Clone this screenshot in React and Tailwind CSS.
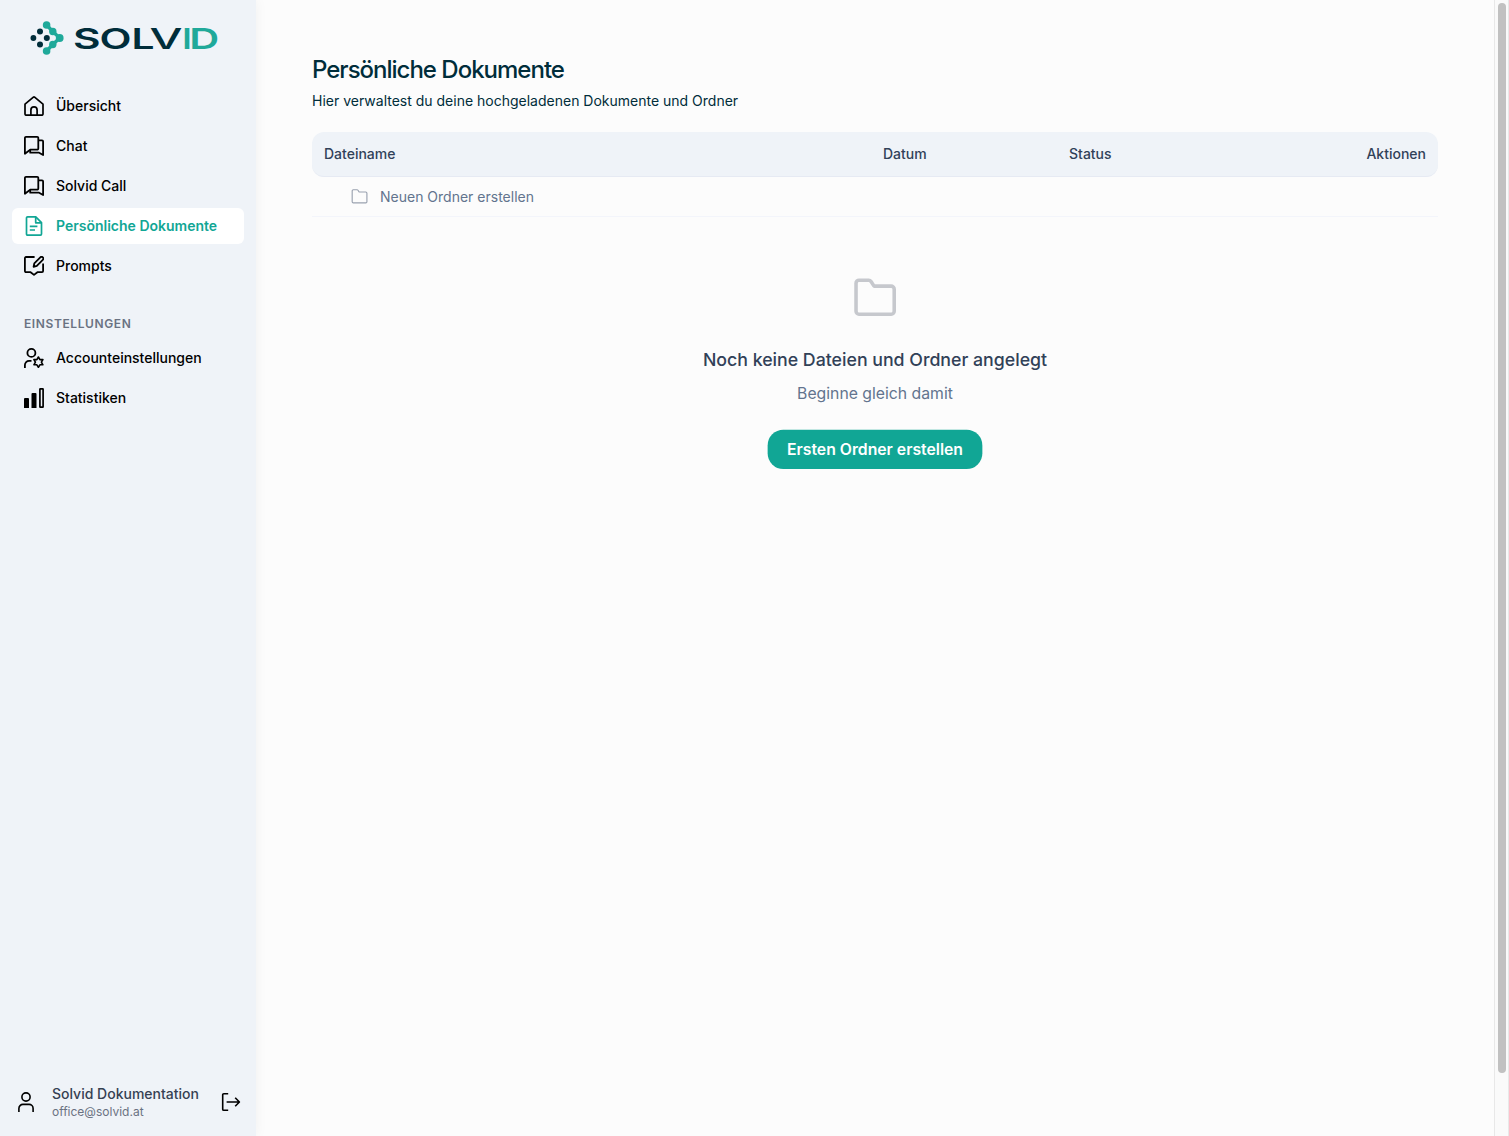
import React from 'react';

function Icon({ size = 20, width = 2, className = '', children }) {
  return (
    <svg
      width={size}
      height={size}
      viewBox="0 0 20 20"
      fill="none"
      stroke="currentColor"
      strokeWidth={width}
      strokeLinejoin="round"
      className={`shrink-0 ${className}`}
    >
      {children}
    </svg>
  );
}

function HomeIcon() {
  return (
    <Icon width={1.7}>
      <path d="M1 8.2 9.4 1.2a1 1 0 0 1 1.2 0L19 8.2V18a1.2 1.2 0 0 1-1.2 1.2H2.2A1.2 1.2 0 0 1 1 18z" />
      <path d="M6.9 19v-5a3.1 3.1 0 0 1 6.2 0v5" />
    </Icon>
  );
}

function ChatIcon() {
  return (
    <Icon width={1.8}>
      <path d="M.9 2A1.1 1.1 0 0 1 2 .9h11.2A1.1 1.1 0 0 1 14.3 2v10.6a1.1 1.1 0 0 1-1.1 1.1H6.2L.9 17.8z" />
      <path d="M14.3 4.4H18a1.1 1.1 0 0 1 1.1 1.1V19l-4-2.3H6.2v-3" />
    </Icon>
  );
}

function DocumentIcon() {
  return (
    <Icon width={1.7}>
      <path d="M2.5 2A1.1 1.1 0 0 1 3.6.9h8.2l5.7 5.7v11.4a1.1 1.1 0 0 1-1.1 1.1H3.6A1.1 1.1 0 0 1 2.5 18z" />
      <path d="M11.7 1v5.8h5.8M5.8 10.4h7.6M5.8 14h5.2" />
    </Icon>
  );
}

function PromptIcon() {
  return (
    <Icon width={1.8}>
      <path d="M10.6 1H2A1.1 1.1 0 0 0 .9 2.1v13a1.1 1.1 0 0 0 1.1 1.1h4.6l3.4 2.7 3.4-2.7H18a1.1 1.1 0 0 0 1.1-1.1V7.4" />
      <path d="m9.6 10.8.7-3.4 6-6a1.7 1.7 0 0 1 2.5 2.5l-6 6z" />
    </Icon>
  );
}

function AccountIcon() {
  return (
    <Icon width={1.8}>
      <circle cx="7.4" cy="4.9" r="4" />
      <path d="M.9 20v-3a4.2 4.2 0 0 1 4.2-4.2h2.4" />
      <path
        strokeWidth="1.6"
        d="m14.4 9 1.5 2.6h3l-1.5 2.6 1.5 2.6h-3l-1.5 2.6-1.5-2.6h-3l1.5-2.6-1.5-2.6h3z"
      />
    </Icon>
  );
}

function StatsIcon() {
  return (
    <Icon width={1.7}>
      <path fill="currentColor" stroke="none" d="M0 11a1 1 0 0 1 1-1h3a1 1 0 0 1 1 1v9H0zM7.5 6a1 1 0 0 1 1-1h3a1 1 0 0 1 1 1v14h-5z" />
      <rect x="15.9" y=".9" width="3.2" height="18.2" rx=".4" />
    </Icon>
  );
}

function FolderIcon({ size, width, className }) {
  return (
    <Icon size={size} width={width} className={className}>
      <path d="M2.3 4.1a1.2 1.2 0 0 1 1.2-1.2h3.9a1.2 1.2 0 0 1 1 .5l1.2 1.9h6.9a1.3 1.3 0 0 1 1.3 1.3v8.9a1.2 1.2 0 0 1-1.2 1.2H3.5a1.2 1.2 0 0 1-1.2-1.2z" />
    </Icon>
  );
}

function Logo() {
  return (
    <svg width="190" height="36" viewBox="0 0 190 36" className="block">
      <g fill="#002d3a">
        <circle cx="3.4" cy="18" r="2.9" />
        <circle cx="10" cy="11.5" r="3" />
        <circle cx="10" cy="24.5" r="3" />
        <circle cx="16.8" cy="18" r="3" />
      </g>
      <path d="M16.6 5 22.8 11.5 29.7 18 22.8 24.5 16.6 31" fill="none" stroke="#1fa99a" strokeWidth="3.4" />
      <g fill="#1fa99a">
        <circle cx="16.6" cy="5" r="3.8" />
        <circle cx="22.8" cy="11.5" r="3.7" />
        <circle cx="29.7" cy="18" r="3.9" />
        <circle cx="22.8" cy="24.5" r="3.7" />
        <circle cx="16.6" cy="31" r="3.8" />
      </g>
      <g fontFamily="Inter, sans-serif" fontWeight="600" fontSize="28.4" fill="#002d3a">
        <text x="43" y="28.6" textLength="27.5" lengthAdjust="spacingAndGlyphs">S</text>
        <text x="69.6" y="28.6" textLength="32" lengthAdjust="spacingAndGlyphs">O</text>
        <text x="101.5" y="28.6" textLength="23" lengthAdjust="spacingAndGlyphs">L</text>
        <text x="119.5" y="28.6" textLength="33" lengthAdjust="spacingAndGlyphs" fontWeight="500">V</text>
        <g fill="#1fa99a">
          <text x="152.3" y="28.6" textLength="9.5" lengthAdjust="spacingAndGlyphs">I</text>
          <text x="159.2" y="28.6" textLength="30" lengthAdjust="spacingAndGlyphs">D</text>
        </g>
      </g>
    </svg>
  );
}

function NavItem({ icon, label, active }) {
  return (
    <a
      className={`flex h-9 items-center gap-3 rounded-md px-3 text-sm ${
        active ? 'bg-white font-semibold text-[#11a695]' : 'font-medium text-black'
      }`}
    >
      {icon}
      {label}
    </a>
  );
}

function Sidebar() {
  return (
    <aside className="flex w-64 shrink-0 flex-col bg-[#eff3f8] shadow-[0_0_12px_rgba(0,0,0,0.05)]">
      <div className="pt-5 pl-[30px]">
        <Logo />
      </div>
      <nav className="mt-8 flex flex-col gap-1 px-3">
        <NavItem icon={<HomeIcon />} label="Übersicht" />
        <NavItem icon={<ChatIcon />} label="Chat" />
        <NavItem icon={<ChatIcon />} label="Solvid Call" />
        <NavItem icon={<DocumentIcon />} label="Persönliche Dokumente" active />
        <NavItem icon={<PromptIcon />} label="Prompts" />
      </nav>
      <h2 className="mt-8 px-6 text-xs font-semibold tracking-wider text-gray-500 uppercase">Einstellungen</h2>
      <nav className="mt-2 flex flex-col gap-1 px-3">
        <NavItem icon={<AccountIcon />} label="Accounteinstellungen" />
        <NavItem icon={<StatsIcon />} label="Statistiken" />
      </nav>

      <div className="mt-auto flex items-center pr-[15px] pb-4 pl-4">
        <Icon width={1.6}>
          <circle cx="10" cy="5" r="4.1" />
          <path d="M2.9 20v-3.6a4 4 0 0 1 4-4h6.2a4 4 0 0 1 4 4V20" />
        </Icon>
        <div className="ml-4 flex-1">
          <p className="text-sm font-medium text-gray-700">Solvid Dokumentation</p>
          <p className="text-xs leading-4 text-gray-500">office@solvid.at</p>
        </div>
        <Icon width={1.6} className="text-black">
          <path d="M7.2 1.7H2.8a1.1 1.1 0 0 0-1.1 1.1v14.4a1.1 1.1 0 0 0 1.1 1.1h4.4M5.6 10h12.6M14.2 5.7 18.4 10l-4.2 4.3" />
        </Icon>
      </div>
    </aside>
  );
}

function App() {
  return (
    <div className="flex h-screen overflow-hidden bg-[#fcfcfc] font-['Inter',sans-serif]">
      <Sidebar />

      <main className="flex-1 pt-[54px] pr-14 pl-14">
        <h1 className="text-2xl font-medium tracking-[-1px] text-[#002d3a]">Persönliche Dokumente</h1>
        <p className="mt-[5px] text-sm text-[#002d3a]">Hier verwaltest du deine hochgeladenen Dokumente und Ordner</p>

        <div className="mt-[21px] flex h-[45px] items-center rounded-xl border-b border-[#e6eaf3] bg-[#eff3f8] px-3 text-sm font-medium text-slate-700">
          <span className="w-[559px]">Dateiname</span>
          <span className="w-[186px]">Datum</span>
          <span className="flex-1">Status</span>
          <span>Aktionen</span>
        </div>
        <div className="flex h-10 items-center gap-[11px] border-b border-[#f3f5fb] pl-[38px] text-sm text-slate-500">
          <FolderIcon size={19} width={1.2} className="text-gray-400" />
          Neuen Ordner erstellen
        </div>

        <div className="flex scale-[0.985] flex-col items-center pt-[55px]">
          <FolderIcon size={50} width={1.45} className="text-[#c6c8cd]" />
          <h3 className="mt-6 text-lg font-medium text-slate-700">Noch keine Dateien und Ordner angelegt</h3>
          <p className="mt-2 text-base text-slate-500">Beginne gleich damit</p>
          <button className="mt-[25px] h-10 rounded-2xl bg-[#11a695] px-5 text-base font-semibold text-white">
            Ersten Ordner erstellen
          </button>
        </div>
      </main>

      {/* scrollbar */}
      <div className="flex w-[15px] shrink-0 justify-center border-x border-[#e8e8e8] bg-[#fafafa] pt-[3px]">
        <div className="h-[1070px] w-2 rounded-full bg-[#c1c1c1]" />
      </div>
    </div>
  );
}

export default App;
